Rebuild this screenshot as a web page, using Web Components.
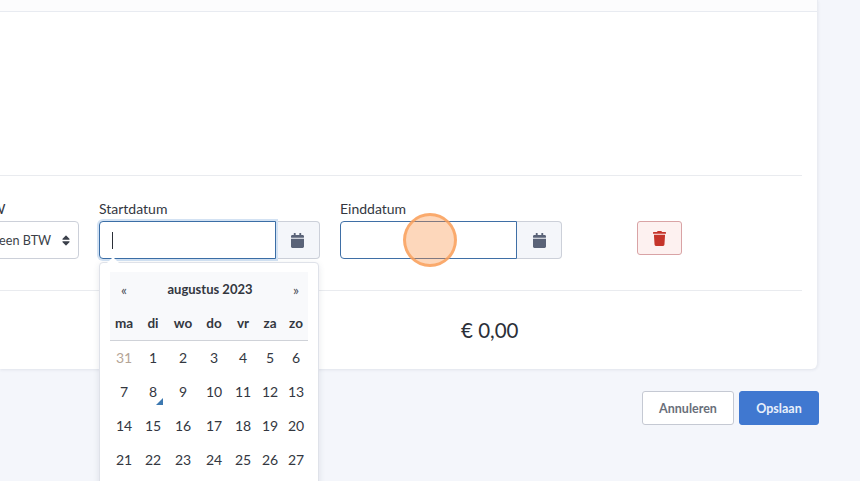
<!DOCTYPE html>
<html lang="nl">
<head>
<meta charset="utf-8">
<title>Startdatum</title>
<style>
    html, body { margin: 0; height: 481px; overflow: hidden; }
    body { background: #f4f6fb; font-family: "Lato", "Liberation Sans", sans-serif; font-size: 14px; color: #2b2f38; }
</style>
</head>
<body>
<edit-page>
    <form-row>
        <form-field label="BTW" width="105">
            <select-box>Geen BTW</select-box>
        </form-field>
        <form-field label="Startdatum" width="221">
            <date-input focused>
                <cal-dropdown></cal-dropdown>
            </date-input>
        </form-field>
        <form-field label="Einddatum" width="222">
            <date-input active></date-input>
        </form-field>
        <delete-button></delete-button>
    </form-row>
    <span slot="total">€ 0,00</span>
    <action-button slot="actions">Annuleren</action-button>
    <action-button slot="actions" primary>Opslaan</action-button>
</edit-page>
<click-marker></click-marker>

<script>
const calendarIcon = `<svg viewBox="0 0 448 512" width="13" height="15" fill="currentColor"><path d="M12 192h424c6.6 0 12 5.4 12 12v260c0 26.5-21.5 48-48 48H48c-26.5 0-48-21.5-48-48V204c0-6.6 5.4-12 12-12zm436-44v-36c0-26.5-21.5-48-48-48h-48V12c0-6.6-5.4-12-12-12h-40c-6.6 0-12 5.4-12 12v52H160V12c0-6.6-5.4-12-12-12h-40c-6.6 0-12 5.4-12 12v52H48C21.5 64 0 85.5 0 112v36c0 6.6 5.4 12 12 12h424c6.6 0 12-5.4 12-12z"/></svg>`;

class EditPage extends HTMLElement {
    constructor(){
        super();
        this.attachShadow({mode:'open'});
        this.shadowRoot.innerHTML = `
        <style>
            :host { display: block; width: 819px; }
            .card {
                width: 818px;
                height: 369px;
                box-sizing: border-box;
                background: white;
                border-right: 1px solid #eaecf2;
                border-radius: 0 0 6px 0;
                box-shadow: 0 1px 3px rgba(60,70,100,0.1);
                padding-right: 15px;
                display: flex;
                flex-direction: column;
            }
            .top { height: 11px; background: #fcfcfd; border-bottom: 1px solid #e8ebf1; margin-right: -15px; flex: none; }
            .blank { height: 163px; flex: none; }
            .form { border-top: 1px solid #e9ebef; border-bottom: 1px solid #e9ebef; height: 114px; flex: none; }
            .total { flex: 1; display: flex; align-items: center; padding: 0 0 1px 461px; font-size: 20.5px; }
            .actions { display: flex; justify-content: flex-end; gap: 5px; margin-top: 22px; }
        </style>
        <div class="card">
            <div class="top"></div>
            <div class="blank"></div>
            <div class="form"><slot></slot></div>
            <div class="total"><slot name="total"></slot></div>
        </div>
        <div class="actions"><slot name="actions"></slot></div>`;
    }
}

class FormRow extends HTMLElement {
    constructor(){
        super();
        this.attachShadow({mode:'open'});
        this.shadowRoot.innerHTML = `
        <style>
            :host { display: flex; gap: 20px; margin-left: -26px; padding-top: 23px; align-items: flex-start; }
        </style>
        <slot></slot>`;
    }
}

class FormField extends HTMLElement {
    constructor(){
        super();
        this.attachShadow({mode:'open'});
        this.shadowRoot.innerHTML = `
        <style>
            :host { display: block; flex: none; }
            label { display: block; height: 20px; line-height: 20px; margin-bottom: 2px; font-size: 14px; color: #33373f; }
        </style>
        <label></label>
        <slot></slot>`;
    }
    connectedCallback(){
        this.style.width = this.getAttribute("width") + "px";
        this.shadowRoot.querySelector("label").textContent = this.getAttribute("label");
    }
}

class SelectBox extends HTMLElement {
    constructor(){
        super();
        this.attachShadow({mode:'open'});
        this.shadowRoot.innerHTML = `
        <style>
            :host {
                display: flex; align-items: center; justify-content: space-between;
                height: 38px; box-sizing: border-box;
                padding: 0 8px 0 15px;
                background: white; border: 1px solid #ccd0d9; border-radius: 4px;
                font-size: 12.6px; color: #3b3f48; white-space: nowrap;
            }
            svg { color: #3a3f4a; }
        </style>
        <slot></slot>
        <svg viewBox="0 0 320 512" width="8" height="13" fill="currentColor"><path d="M41 288h238c21.4 0 32.1 25.9 17 41L177 448c-9.4 9.4-24.6 9.4-33.9 0L24 329c-15.1-15.1-4.4-41 17-41zm255-105L177 64c-9.4-9.4-24.6-9.4-33.9 0L24 183c-15.1 15.1-4.4 41 17 41h238c21.4 0 32.1-25.9 17-41z"/></svg>`;
    }
}

class DateInput extends HTMLElement {
    constructor(){
        super();
        this.attachShadow({mode:'open'});
        this.shadowRoot.innerHTML = `
        <style>
            :host { display: flex; position: relative; height: 38px; }
            .box {
                width: 177px; box-sizing: border-box; flex: none;
                background: white; border: 1px solid #ccd0d9; border-radius: 4px 0 0 4px;
                display: flex; align-items: center; padding-left: 12px;
            }
            :host([focused]) .box { border-color: #3b6ea6; box-shadow: 0 0 0 2px #d3e2f3; position: relative; }
            :host([active]) .box { border-color: #3f6fa6; }
            .caret { display: none; width: 1px; height: 17px; background: #2b2f38; }
            :host([focused]) .caret { display: block; }
            .append {
                flex: 1; box-sizing: border-box;
                background: #f4f6fa; border: 1px solid #ccd0d9; border-left: none; border-radius: 0 4px 4px 0;
                display: flex; align-items: center; justify-content: center;
                color: #5a6378;
            }
        </style>
        <div class="box"><span class="caret"></span></div>
        <div class="append">${calendarIcon}</div>
        <slot></slot>`;
    }
}

class CalDropdown extends HTMLElement {
    constructor(){
        super();
        this.attachShadow({mode:'open'});
        let days = [31,1,2,3,4,5,6,7,8,9,10,11,12,13,14,15,16,17,18,19,20,21,22,23,24,25,26,27];
        let cells = days.map((d, i) => {
            let cls = i == 0 ? "old" : (d == 8 ? "today" : "");
            return `<div class="day ${cls}">${d}</div>`;
        }).join("");
        let names = ["ma","di","wo","do","vr","za","zo"].map(n => `<div class="dow">${n}</div>`).join("");
        this.shadowRoot.innerHTML = `
        <style>
            :host {
                display: block; position: absolute; left: 0; top: 41px;
                width: 220px; box-sizing: border-box;
                background: white; border: 1px solid #dfe2e9; border-radius: 4px;
                box-shadow: 0 2px 6px rgba(60,70,100,0.12);
                padding: 9px 10px 40px;
                z-index: 5;
            }
            .arrow {
                position: absolute; left: 7px; top: -6px; width: 0; height: 0;
                border-left: 6px solid transparent; border-right: 6px solid transparent; border-bottom: 6px solid white;
            }
            .head { background: #f8f9fb; border-bottom: 1px solid #cfd2d8; }
            .grid { display: grid; grid-template-columns: 28px 30px 30px 32px 26px 28px 24px; }
            .title { display: flex; justify-content: space-between; align-items: center; height: 34px; padding: 0 9px 0 11px; font-weight: 700; font-size: 13px; color: #33373f; }
            .title span { font-weight: 400; font-size: 14px; color: #4a4e57; }
            .dow { height: 34px; line-height: 34px; text-align: center; font-weight: 700; font-size: 13.5px; color: #33373f; }
            .day { height: 34px; line-height: 34px; text-align: center; font-size: 14px; color: #33373f; position: relative; }
            .old { color: #b5a596; }
            .today::after {
                content: ""; position: absolute; right: 5px; bottom: 4px;
                border-left: 7px solid transparent; border-bottom: 7px solid #3c78b0;
            }
        </style>
        <div class="arrow"></div>
        <div class="head">
            <div class="title"><span>«</span>augustus 2023<span>»</span></div>
            <div class="grid">${names}</div>
        </div>
        <div class="grid">${cells}</div>`;
    }
}

class DeleteButton extends HTMLElement {
    constructor(){
        super();
        this.attachShadow({mode:'open'});
        this.shadowRoot.innerHTML = `
        <style>
            :host {
                display: flex; align-items: center; justify-content: center; flex: none;
                width: 45px; height: 34px; box-sizing: border-box;
                margin: 22px 0 0 55px;
                background: #fdf1f0; border: 1px solid #d9a3a5; border-radius: 3px;
                color: #c5352b;
            }
        </style>
        <svg viewBox="0 0 448 512" width="13" height="15" fill="currentColor"><path d="M432 32H312l-9.4-18.7A24 24 0 0 0 281.1 0H166.8a23.72 23.72 0 0 0-21.4 13.3L136 32H16A16 16 0 0 0 0 48v32a16 16 0 0 0 16 16h416a16 16 0 0 0 16-16V48a16 16 0 0 0-16-16zM53.2 467a48 48 0 0 0 47.9 45h245.8a48 48 0 0 0 47.9-45L416 128H32z"/></svg>`;
    }
}

class ActionButton extends HTMLElement {
    constructor(){
        super();
        this.attachShadow({mode:'open'});
        this.shadowRoot.innerHTML = `
        <style>
            :host {
                display: flex; align-items: center; justify-content: center;
                width: 92px; height: 34px; box-sizing: border-box;
                background: white; border: 1px solid #c5c9d3; border-radius: 3px;
                font-size: 12.5px; font-weight: 700; color: #6a6f7a;
            }
            :host([primary]) { width: 80px; background: #4078d0; border-color: #4078d0; color: #e8f0fb; }
        </style>
        <slot></slot>`;
    }
}

class ClickMarker extends HTMLElement {
    constructor(){
        super();
        this.attachShadow({mode:'open'});
        this.shadowRoot.innerHTML = `
        <style>
            :host {
                display: block; position: absolute; left: 403px; top: 213px;
                width: 54px; height: 54px; box-sizing: border-box;
                border-radius: 50%;
                background: rgba(250,140,60,0.35);
                border: 3px solid rgba(250,160,90,0.8);
                z-index: 10;
            }
        </style>`;
    }
}

customElements.define('edit-page', EditPage);
customElements.define('form-row', FormRow);
customElements.define('form-field', FormField);
customElements.define('select-box', SelectBox);
customElements.define('date-input', DateInput);
customElements.define('cal-dropdown', CalDropdown);
customElements.define('delete-button', DeleteButton);
customElements.define('action-button', ActionButton);
customElements.define('click-marker', ClickMarker);
</script>
</body>
</html>
